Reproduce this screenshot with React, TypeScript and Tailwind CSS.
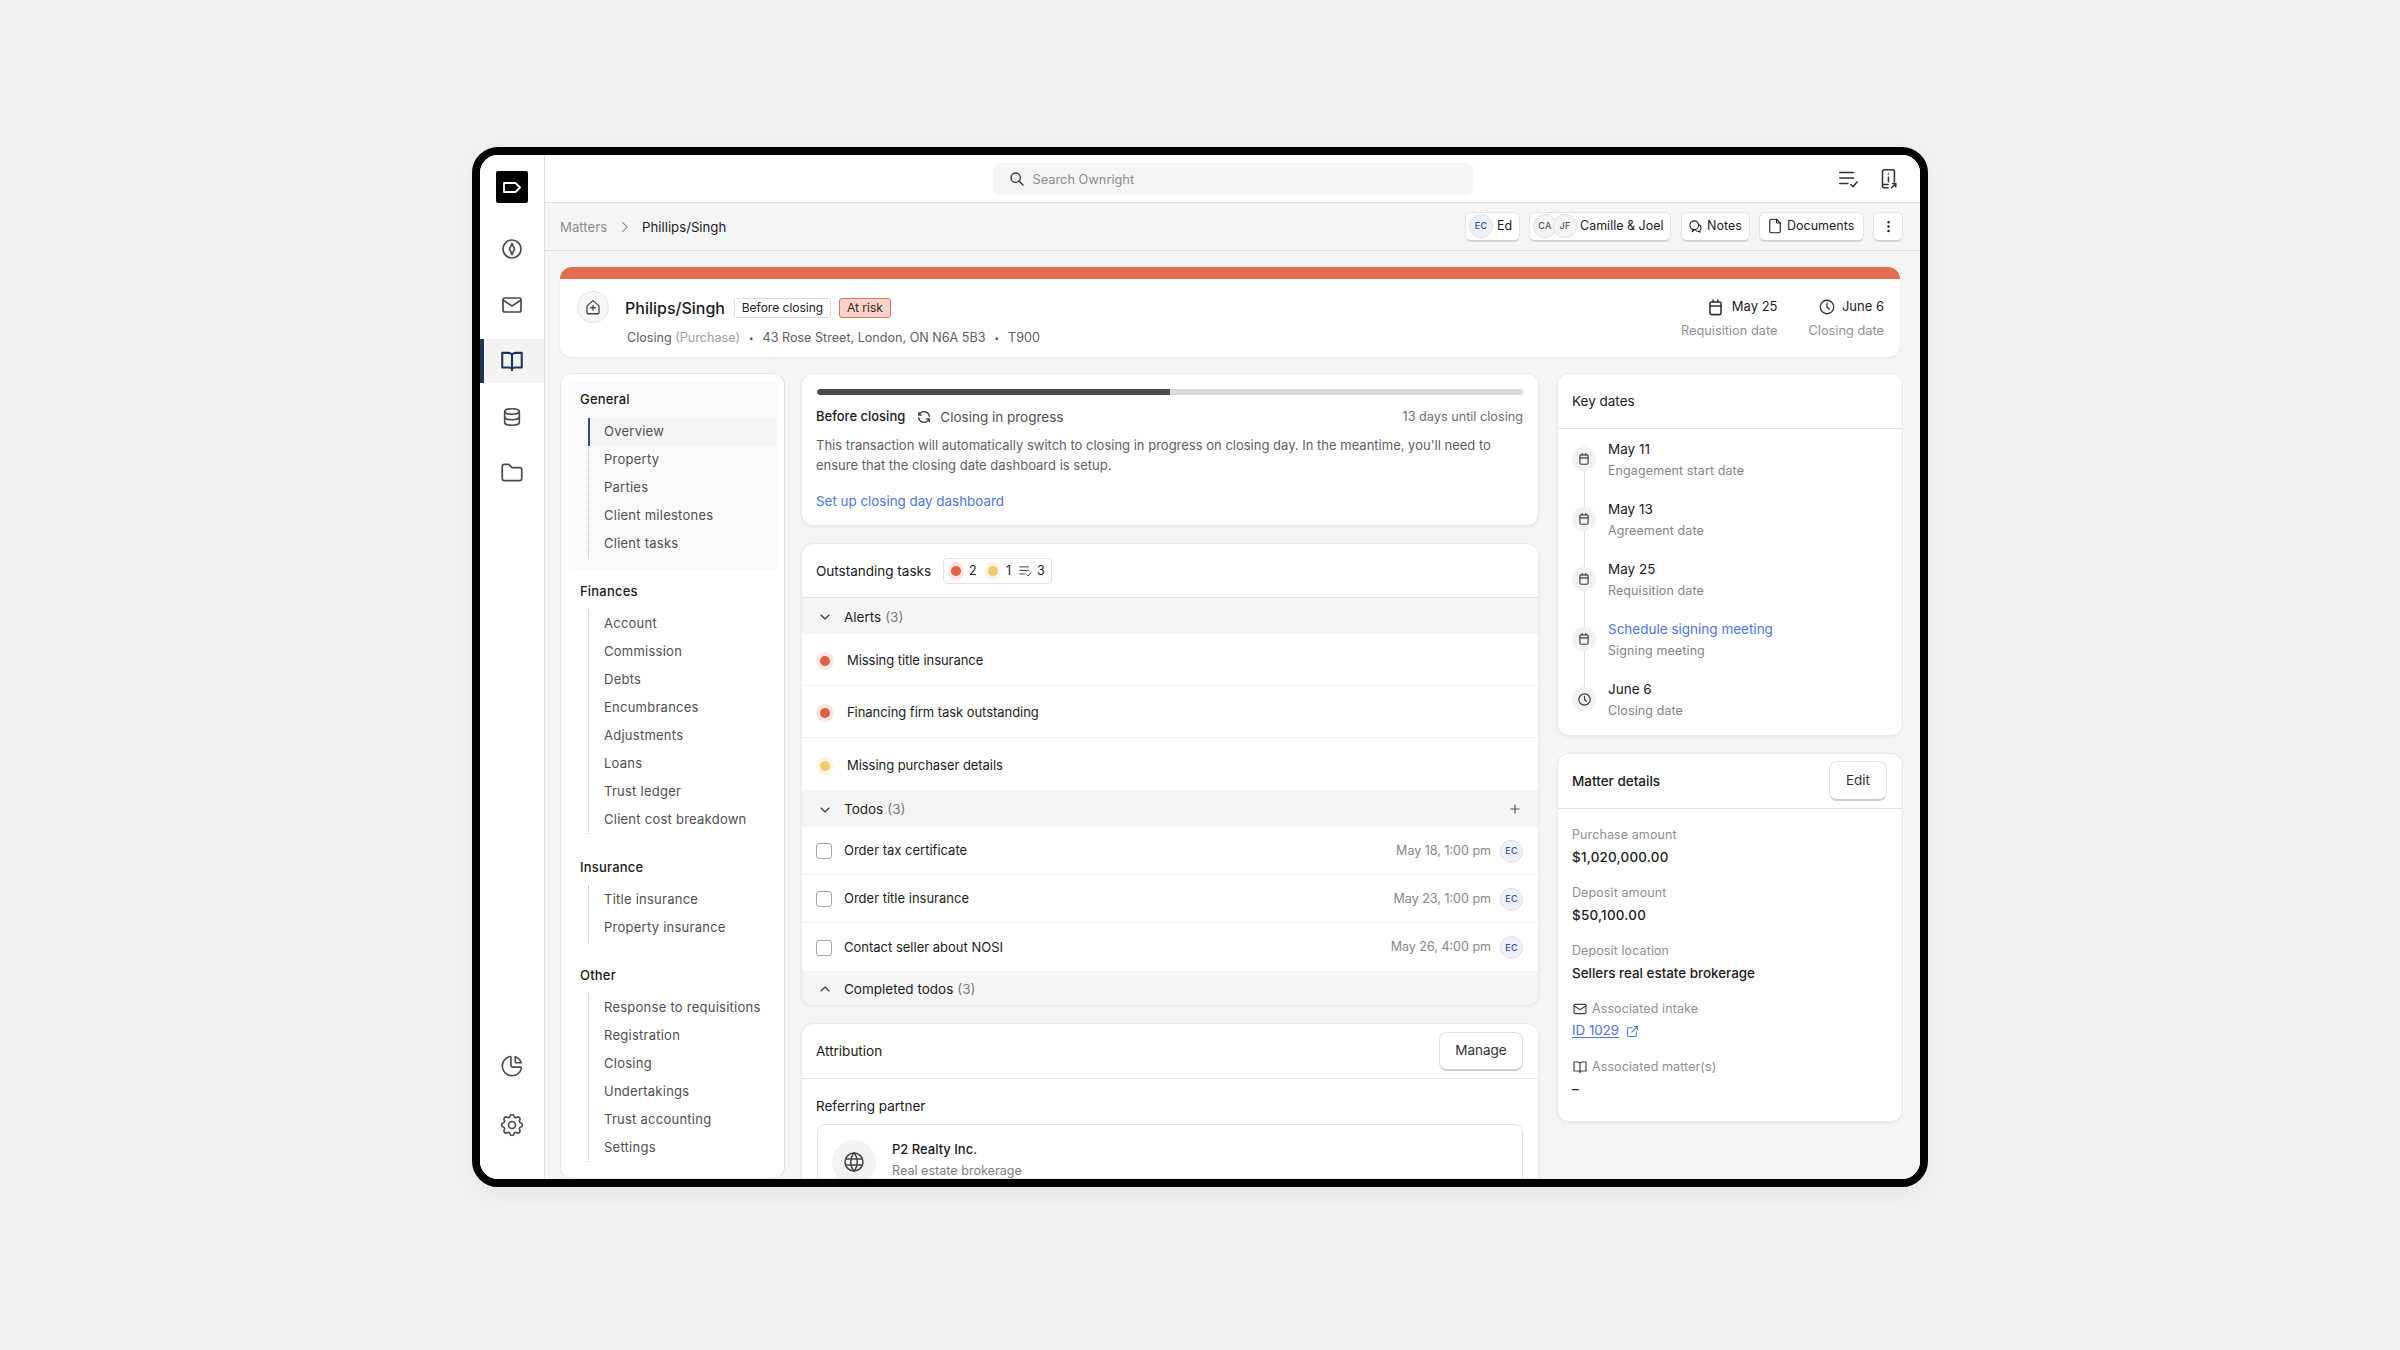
import React from "react";
import { TbSearch, TbRefresh, TbDotsVertical, TbClock, TbFile, TbMail, TbDatabase, TbFolder, TbChartPie, TbSettings, TbWorld, TbExternalLink, TbChevronRight, TbChevronDown, TbChevronUp, TbPlus } from "react-icons/tb";

const Ico = ({ s = 16, w = 1.5, children, c = "" }: { s?: number; w?: number; children: React.ReactNode; c?: string }) => (
  <svg width={s} height={s} viewBox="0 0 24 24" fill="none" stroke="currentColor" strokeWidth={w} strokeLinecap="round" strokeLinejoin="round" className={c}>{children}</svg>
);
const Cal = ({ s = 14, c = "" }: { s?: number; c?: string }) => (
  <Ico s={s} w={2} c={c}><rect x="5" y="5" width="14" height="16" rx="2" /><path d="M5 10h14M9 2.500V5M15 2.500V5" /></Ico>
);
const Book = ({ s = 20, w = 2, c = "" }: { s?: number; w?: number; c?: string }) => (
  <Ico s={s} w={w} c={c}><path d="M12 6C11 5 10 4.500 8.500 4.500H3V18h6.500c1 0 2 .4 2.500 1.200.5-.8 1.500-1.200 2.500-1.200H21V4.500h-5.500C14 4.500 13 5 12 6ZM12 6v14.500" /></Ico>
);
const Compass = () => (
  <Ico s={24} w={1.7}><circle cx="12" cy="12" r="9" /><path d="M12 6.500 14.500 12 12 17.500 9.500 12Z" /></Ico>
);
const ListCheck = ({ s = 20 }: { s?: number }) => (
  <Ico s={s} w={1.7}><path d="M3 5h15M3 11h15M3 17h9M15 18l2.500 2.500L22 15" /></Ico>
);
const Device = () => (
  <Ico s={22} w={1.7}><path d="M6 18V4a2 2 0 0 1 2-2h9a2 2 0 0 1 2 2v11M6 18v2a1.500 1.500 0 0 0 1.500 1.500H12M6 18h6M12.500 6.500v.1M12.500 10v5M16 21.500l4.500-4.500M17 17h3.500v3.500" /></Ico>
);
const HousePlus = () => (
  <Ico s={18} w={1.7}><path d="M4 10.500 12 3.500l8 7V20a1 1 0 0 1-1 1H5a1 1 0 0 1-1-1ZM12 10v6M9 13h6" /></Ico>
);
const Notes = () => (
  <Ico s={15} w={1.7}><circle cx="10" cy="10" r="7" /><path d="M7 17v3.500l3-3.500M17 9a5.500 5.500 0 0 1 2 9.500V21l-2.500-1.500a5.500 5.500 0 0 1-4-1" /></Ico>
);

const Avatar = ({ t, tone = "blue", s = "w-[24px] h-[24px]" }: { t: string; tone?: "blue" | "gray"; s?: string }) => (
  <span className={`${s} rounded-full flex items-center justify-center text-[9px] tracking-[0.3px] font-medium shrink-0 border ${tone === "blue" ? "bg-[#eef1fb] border-[#d9dff5] text-[#3b4fa0]" : "bg-[#f4f4f4] border-[#dedede] text-[#555]"}`}>{t}</span>
);

const TopBtn = ({ children, c = "" }: { children: React.ReactNode; c?: string }) => (
  <button className={`h-[30px] flex items-center rounded-[6px] bg-white border border-[#e4e4e4] border-b-2 border-b-[#d4d4d4] text-[12.500px] text-[#1c1c1c] ${c}`}>{children}</button>
);

const Card = ({ children, c = "" }: { children: React.ReactNode; c?: string }) => (
  <section className={`bg-white rounded-[12px] border border-[#e9e9e9] shadow-[0_1px_3px_rgba(0,0,0,0.06)] overflow-hidden ${c}`}>{children}</section>
);

const Dot = ({ tone, small = false }: { tone: "red" | "yellow"; small?: boolean }) => (
  <span className={`${small ? "w-[16px] h-[18px]" : "w-[18px] h-[18px]"} rounded-full flex items-center justify-center shrink-0 ${tone === "red" ? "bg-[#fde6e1]" : "bg-[#fdf5e3]"}`}>
    <span className={`w-[10px] h-[10px] rounded-full ${tone === "red" ? "bg-[#e0603f]" : "bg-[#f3c96f]"}`} />
  </span>
);

const SideItem = ({ children, active = false, c = "" }: { children: React.ReactNode; active?: boolean; c?: string }) => (
  <div className={`h-[44px] w-full flex items-center justify-center relative ${active ? "bg-[#f3f3f3] text-[#1d3557]" : "text-[#4a4a4a]"} ${c}`}>
    {active && <span className="absolute left-0 top-0 bottom-0 w-[4px] bg-[#1d3557]" />}
    {children}
  </div>
);

const navGroups: { title: string; items: string[]; box?: boolean }[] = [
  { title: "General", items: ["Overview", "Property", "Parties", "Client milestones", "Client tasks"], box: true },
  { title: "Finances", items: ["Account", "Commission", "Debts", "Encumbrances", "Adjustments", "Loans", "Trust ledger", "Client cost breakdown"] },
  { title: "Insurance", items: ["Title insurance", "Property insurance"] },
  { title: "Other", items: ["Response to requisitions", "Registration", "Closing", "Undertakings", "Trust accounting", "Settings"] },
];

const SectionHead = ({ open, title, n, plus = false, c = "" }: { open: boolean; title: string; n: number; plus?: boolean; c?: string }) => (
  <div className={`flex items-center bg-[#f5f5f5] pl-[15px] pr-[16px] pt-[2px] text-[13.500px] ${c}`}>
    {open ? <TbChevronDown size={16} className="text-[#333]" strokeWidth={1.6} /> : <TbChevronUp size={16} className="text-[#333]" strokeWidth={1.6} />}
    <span className="ml-[11px] text-[#1c1c1c]">{title}</span>
    <span className="ml-[4px] text-[#7a7a7a]">({n})</span>
    {plus && <TbPlus size={14} className="ml-auto -mt-[2px] text-[#555]" />}
  </div>
);

const keyDates = [
  { d: "May 11", l: "Engagement start date" },
  { d: "May 13", l: "Agreement date" },
  { d: "May 25", l: "Requisition date" },
  { d: "Schedule signing meeting", l: "Signing meeting", link: true },
  { d: "June 6", l: "Closing date", clock: true },
];

export default function App() {
  return (
    <div className="w-full h-[1350px] bg-[#f2f2f2] flex justify-center pt-[147px] overflow-hidden font-['Inter',sans-serif] antialiased">
      <div className="w-[1456px] h-[1040px] border-[8px] border-black rounded-[26px] overflow-hidden flex bg-white shadow-[0_8px_24px_rgba(0,0,0,0.05)]">
        {/* Sidebar */}
        <aside className="w-[65px] shrink-0 border-r border-[#dcdcdc] flex flex-col items-center pt-[16px] pb-[32px] bg-white">
          <div className="w-[32px] h-[32px] bg-black rounded-[2px] flex items-center justify-center mb-[24px] shrink-0">
            <svg width="20" height="13" viewBox="0 0 20 13" fill="none" stroke="#fff" strokeWidth="1.800" strokeLinejoin="round"><path d="M2 2h11.500L18 6.500 13.500 11H2Z" /></svg>
          </div>
          <div className="w-full flex flex-col gap-[12px]">
            <SideItem><Compass /></SideItem>
            <SideItem><TbMail size={24} strokeWidth={1.7} /></SideItem>
            <SideItem active><Book s={26} w={1.9} /></SideItem>
            <SideItem><TbDatabase size={22} strokeWidth={1.8} /></SideItem>
            <SideItem><TbFolder size={26} strokeWidth={1.6} /></SideItem>
          </div>
          <div className="mt-auto w-full flex flex-col gap-[15px]">
            <SideItem><TbChartPie size={26} strokeWidth={1.5} /></SideItem>
            <SideItem><TbSettings size={28} strokeWidth={1.4} /></SideItem>
          </div>
        </aside>

        <div className="flex-1 min-w-0 flex flex-col bg-[#f5f5f5]">
          {/* Top bar */}
          <header className="h-[48px] shrink-0 bg-white border-b border-[#dedede] grid grid-cols-[1fr_480px_1fr] items-center">
            <div />
            <div className="h-[32px] rounded-[6px] bg-[#f5f5f5] flex items-center pl-[16px] text-[12.800px] text-[#8c8c8c]">
              <TbSearch size={16} className="text-[#333] mr-[8px]" />
              <span className="pt-[2px]">Search Ownright</span>
            </div>
            <div className="flex justify-end items-center gap-[18px] pr-[21px] text-[#333]">
              <ListCheck s={22} />
              <Device />
            </div>
          </header>

          {/* Breadcrumb bar */}
          <div className="h-[48px] shrink-0 border-b border-[#dedede] flex items-center pl-[15px] pr-[17px] text-[13.200px]">
            <span className="text-[#8c8c8c] pt-[2px]">Matters</span>
            <TbChevronRight size={18} className="ml-[9px] mr-[8px] text-[#777]" strokeWidth={1.4} />
            <span className="text-[#1c1c1c] pt-[2px]">Phillips/Singh</span>
            <div className="ml-auto flex items-center">
              <TopBtn c="w-[55px] pl-[3px] mr-[9px]"><Avatar t="EC" /><span className="ml-[4px] pt-[1px]">Ed</span></TopBtn>
              <TopBtn c="w-[142px] pl-[3px] mr-[10px]">
                <Avatar t="CA" tone="gray" />
                <span className="-ml-[4px]"><Avatar t="JF" tone="gray" /></span>
                <span className="ml-[3px] pt-[1px]">Camille &amp; Joel</span>
              </TopBtn>
              <TopBtn c="w-[69px] pl-[6px] gap-[4px] mr-[9px]"><Notes /><span className="pt-[1px]">Notes</span></TopBtn>
              <TopBtn c="w-[105px] pl-[6px] gap-[3px] mr-[9px]"><TbFile size={18} strokeWidth={1.5} /><span className="pt-[1px]">Documents</span></TopBtn>
              <TopBtn c="w-[30px] justify-center"><TbDotsVertical size={15} /></TopBtn>
            </div>
          </div>

          {/* Content */}
          <div className="flex-1 min-h-0 pl-[15px] pr-[17px] pt-[16px] flex flex-col gap-[16px] overflow-hidden">
            {/* Banner */}
            <section className="h-[90px] shrink-0 mr-[3px] bg-white rounded-[12px] overflow-hidden shadow-[0_1px_3px_rgba(0,0,0,0.06)] flex flex-col">
              <div className="h-[12px] bg-[#e36d50] shrink-0" />
              <div className="flex-1 flex items-start pl-[17px] pr-[16px] pt-[12px]">
                <div className="w-[32px] h-[32px] rounded-full bg-[#f7f7f7] border border-[#e2e2e2] flex items-center justify-center text-[#444] shrink-0">
                  <HousePlus />
                </div>
                <div className="ml-[16px]">
                  <div className="flex items-center h-[32px] pt-[1px]">
                    <span className="text-[16px] text-[#1a1a1a] font-medium leading-none">Philips/Singh</span>
                    <span className="ml-[9px] h-[20px] w-[97px] flex items-center justify-center rounded-[3px] border border-[#dcdcdc] bg-white text-[12px] text-[#222]">Before closing</span>
                    <span className="ml-[8px] h-[20px] w-[52px] flex items-center justify-center rounded-[3px] border border-[#e2745c] bg-[#fbd3c9] text-[12px] text-[#3a2420]">At risk</span>
                  </div>
                  <div className="mt-[5px] ml-[2px] h-[20px] flex items-center text-[12.600px] text-[#5e5e5e]">
                    <span>Closing <span className="text-[#a0a0a0]">(Purchase)</span></span>
                    <span className="mx-[9px] text-[8px] text-[#444]">•</span>
                    <span>43 Rose Street, London, ON N6A 5B3</span>
                    <span className="mx-[9px] text-[8px] text-[#444]">•</span>
                    <span>T900</span>
                  </div>
                </div>
                <div className="ml-auto flex gap-[31px] text-right">
                  <div>
                    <div className="h-[32px] flex items-center justify-end gap-[7px] text-[13px] text-[#1c1c1c]"><Cal s={19} c="text-[#333]" />May 25</div>
                    <div className="text-[12.800px] leading-[16px] text-[#919191]">Requisition date</div>
                  </div>
                  <div>
                    <div className="h-[32px] flex items-center justify-end gap-[6px] text-[13px] text-[#1c1c1c]"><TbClock size={18} strokeWidth={1.7} className="text-[#333]" />June 6</div>
                    <div className="text-[12.800px] leading-[16px] text-[#919191]">Closing date</div>
                  </div>
                </div>
              </div>
            </section>

            {/* Columns */}
            <div className="flex-1 min-h-0 flex gap-[16px] overflow-hidden">
              {/* Left nav */}
              <nav className="w-[225px] shrink-0 bg-white rounded-[12px] border border-[#e6e6e6] border-r-[#dcdcdc] px-[7px] pt-[8px] flex flex-col gap-[4px] overflow-hidden">
                {navGroups.map((g) => (
                  <div key={g.title} className={`pt-[8px] pb-[12px] pl-[12px] rounded-[4px] ${g.box ? "bg-[#fafafa]" : ""}`}>
                    <div className="h-[20px] flex items-center text-[13px] text-[#1a1a1a] font-medium tracking-[0.2px]">{g.title}</div>
                    <ul className="mt-[8px] ml-[8px] border-l border-dotted border-[#b5b5b5]">
                      {g.items.map((it) => (
                        <li key={it} className={`h-[28px] flex items-center pl-[15px] text-[13px] text-[#4f4f4f] tracking-[0.25px] relative ${it === "Overview" ? "bg-[#f5f5f5]" : ""}`}>
                          {it === "Overview" && <span className="absolute -left-[1px] top-0 bottom-0 w-[2px] bg-[#2f4a94]" />}
                          {it}
                        </li>
                      ))}
                    </ul>
                  </div>
                ))}
              </nav>

              {/* Middle */}
              <div className="w-[738px] shrink-0 flex flex-col gap-[17px]">
                <Card c="h-[153px] shrink-0 px-[15px] pt-[15px]">
                  <div className="h-[6px] rounded-full bg-[#d9d9d9] overflow-hidden">
                    <div className="h-full w-[353px] bg-[#4a4a4a] rounded-l-full" />
                  </div>
                  <div className="mt-[12px] h-[20px] flex items-center text-[13.500px] pl-0 -ml-[1px]">
                    <span className="text-[#1a1a1a] font-medium text-[13px]">Before closing</span>
                    <TbRefresh size={16} className="ml-[11px] mr-[8px] text-[#444]" />
                    <span className="text-[#4f4f4f]">Closing in progress</span>
                    <span className="ml-auto text-[#6e6e6e] text-[12.700px]">13 days until closing</span>
                  </div>
                  <p className="mt-[8px] -ml-[1px] text-[13px] leading-[20px] text-[#5f5f5f]">This transaction will automatically switch to closing in progress on closing day. In the meantime, you'll need to<br />ensure that the closing date dashboard is setup.</p>
                  <div className="mt-[16px] -ml-[1px] text-[13.400px] leading-[20px] text-[#4d74e0]">Set up closing day dashboard</div>
                </Card>

                <Card c="h-[463px] shrink-0 flex flex-col">
                  <div className="h-[54px] shrink-0 flex items-center pl-[14px] pt-[1px] border-b border-[#e2e2e2] text-[13.500px] text-[#1a1a1a]">
                    <span>Outstanding tasks</span>
                    <span className="ml-[12px] h-[26px] flex items-center pl-[4px] pr-[6px] rounded-[4px] border border-[#e4e4e4] text-[12.500px]">
                      <Dot tone="red" small /><span className="w-[10px] ml-[5px]">2</span>
                      <span className="ml-[6px]"><Dot tone="yellow" small /></span><span className="w-[6px] ml-[5px]">1</span>
                      <span className="ml-[6px] text-[#444] flex"><ListCheck s={14} /></span><span className="ml-[5px]">3</span>
                    </span>
                  </div>
                  <SectionHead open title="Alerts" n={3} c="h-[36px] shrink-0" />
                  {[
                    { t: "Missing title insurance", tone: "red" as const },
                    { t: "Financing firm task outstanding", tone: "red" as const },
                    { t: "Missing purchaser details", tone: "yellow" as const },
                  ].map((a, i) => (
                    <div key={a.t} className={`h-[52px] shrink-0 flex items-center pl-[15px] pt-[3px] text-[13px] text-[#1c1c1c] ${i < 2 ? "border-b border-[#f3f3f3]" : ""}`}>
                      <span className="-ml-[1px]"><Dot tone={a.tone} /></span>
                      <span className="ml-[13px] tracking-[-0.05px]">{a.t}</span>
                    </div>
                  ))}
                  <SectionHead open title="Todos" n={3} plus c="h-[37px] shrink-0" />
                  {[
                    { t: "Order tax certificate", d: "May 18, 1:00 pm" },
                    { t: "Order title insurance", d: "May 23, 1:00 pm" },
                    { t: "Contact seller about NOSI", d: "May 26, 4:00 pm" },
                  ].map((a, i) => (
                    <div key={a.t} className={`h-[48px] shrink-0 flex items-center pl-[14px] pr-[15px] text-[13px] text-[#1c1c1c] ${i < 2 ? "border-b-2 border-[#f6f6f6] pt-[2px]" : "pt-[1px]"}`}>
                      <span className="w-[16px] h-[16px] rounded-[3px] border border-[#a8a8a8] bg-white shrink-0" />
                      <span className="ml-[12px]">{a.t}</span>
                      <span className="ml-auto text-[12.500px] text-[#858585]">{a.d}</span>
                      <span className="ml-[9px]"><Avatar t="EC" s="w-[23px] h-[23px]" /></span>
                    </div>
                  ))}
                  <SectionHead open={false} title="Completed todos" n={3} c="flex-1" />
                </Card>

                <Card c="flex-1 min-h-0 rounded-b-none">
                  <div className="h-[55px] flex items-center justify-between pl-[14px] pr-[15px] border-b border-[#e2e2e2] text-[13.500px] text-[#1a1a1a]">
                    <span className="pt-[1px]">Attribution</span>
                    <button className="w-[84px] h-[39px] rounded-[8px] bg-white border border-[#e0e0e0] border-b-2 border-b-[#cfcfcf] text-[13.500px] text-[#333]">Manage</button>
                  </div>
                  <div className="px-[15px] pt-[17px]">
                    <div className="h-[20px] -ml-[1px] flex items-center text-[13.500px] text-[#1a1a1a]">Referring partner</div>
                    <div className="mt-[8px] h-[80px] rounded-[8px] border border-[#e2e2e2] flex items-start pl-[15px] pt-[15px]">
                      <span className="w-[44px] h-[44px] rounded-full bg-[#f3f3f3] flex items-center justify-center text-[#444] shrink-0 -ml-[1px]"><TbWorld size={24} strokeWidth={1.5} /></span>
                      <div className="ml-[16px]">
                        <div className="-mt-[1px] text-[13px] leading-[20px] text-[#1a1a1a] font-medium">P2 Realty Inc.</div>
                        <div className="mt-[2px] text-[12.600px] leading-[20px] text-[#7d7d7d]">Real estate brokerage</div>
                      </div>
                    </div>
                  </div>
                </Card>
              </div>

              {/* Right */}
              <div className="w-[346px] shrink-0 ml-[2px] flex flex-col gap-[17px]">
                <Card c="h-[363px] shrink-0">
                  <div className="h-[55px] flex items-center pl-[14px] pt-[1px] border-b border-[#e2e2e2] text-[13.500px] text-[#1a1a1a]">Key dates</div>
                  <div className="pl-[14px] pt-[9px]">
                    {keyDates.map((k, i) => (
                      <div key={k.l} className="h-[60px] flex relative">
                        <div className="w-[24px] shrink-0 flex flex-col items-center relative pt-[9px]">
                          <span className="w-[24px] h-[24px] rounded-full bg-[#f1f1f1] flex items-center justify-center text-[#3f3f3f] relative z-10 shrink-0">
                            {k.clock ? <TbClock size={15} strokeWidth={1.9} /> : <Cal s={14} />}
                          </span>
                          {i < 4 && <span className="absolute top-[33px] h-[36px] w-px bg-[#e0e0e0]" />}
                        </div>
                        <div className="ml-[12px]">
                          <div className={`h-[22px] flex items-center text-[13.500px] ${k.link ? "text-[#4d74e0]" : "text-[#1a1a1a]"}`}>{k.d}</div>
                          <div className="h-[22px] flex items-center text-[12.500px] text-[#858585] tracking-[0.1px]">{k.l}</div>
                        </div>
                      </div>
                    ))}
                  </div>
                </Card>

                <Card c="h-[369px] shrink-0">
                  <div className="h-[55px] flex items-center justify-between pl-[14px] pr-[15px] border-b border-[#e2e2e2] text-[13.500px] text-[#1a1a1a]">
                    <span className="font-medium pt-[1px]">Matter details</span>
                    <button className="w-[58px] h-[40px] rounded-[8px] bg-white border border-[#e0e0e0] border-b-2 border-b-[#cfcfcf] text-[13.500px] text-[#333]">Edit</button>
                  </div>
                  <div className="pl-[14px] pt-[15px] flex flex-col gap-[14px]">
                    {[
                      { l: "Purchase amount", v: "$1,020,000.00", n: true },
                      { l: "Deposit amount", v: "$50,100.00", n: true },
                      { l: "Deposit location", v: "Sellers real estate brokerage" },
                    ].map((r) => (
                      <div key={r.l}>
                        <div className="h-[22px] flex items-center text-[12.500px] text-[#8f8f8f] tracking-[0.1px]">{r.l}</div>
                        <div className={`h-[22px] flex items-center text-[13.400px] text-[#1a1a1a] font-medium ${r.n ? "tracking-[0.25px]" : ""}`}>{r.v}</div>
                      </div>
                    ))}
                    <div>
                      <div className="h-[22px] flex items-center text-[12.500px] text-[#8f8f8f] tracking-[0.1px]"><TbMail size={16} className="text-[#444] mr-[4px]" strokeWidth={1.7} />Associated intake</div>
                      <div className="h-[22px] flex items-center text-[13.300px] text-[#4d74e0]"><span className="underline underline-offset-2">ID 1029</span><TbExternalLink size={15} className="ml-[6px]" strokeWidth={1.7} /></div>
                    </div>
                    <div>
                      <div className="h-[22px] flex items-center text-[12.500px] text-[#8f8f8f] tracking-[0.1px]"><Book s={16} w={1.8} c="text-[#444] mr-[4px]" />Associated matter(s)</div>
                      <div className="h-[22px] flex items-center text-[13.400px] text-[#1a1a1a] font-medium">–</div>
                    </div>
                  </div>
                </Card>
              </div>
            </div>
          </div>
        </div>
      </div>
    </div>
  );
}
